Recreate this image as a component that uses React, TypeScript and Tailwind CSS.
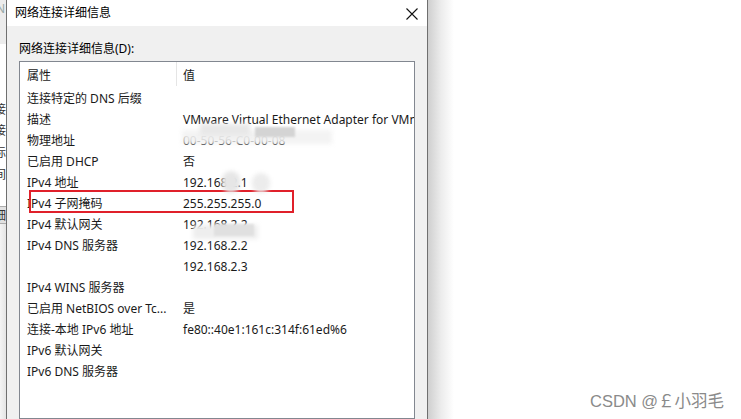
import React from "react";

const rows: [string, string][] = [
  ["连接特定的 DNS 后缀", ""],
  ["描述", "VMware Virtual Ethernet Adapter for VMnet8"],
  ["物理地址", "00-50-56-C0-00-08"],
  ["已启用 DHCP", "否"],
  ["IPv4 地址", "192.168.2.1"],
  ["IPv4 子网掩码", "255.255.255.0"],
  ["IPv4 默认网关", "192.168.2.2"],
  ["IPv4 DNS 服务器", "192.168.2.2"],
  ["", "192.168.2.3"],
  ["IPv4 WINS 服务器", ""],
  ["已启用 NetBIOS over Tc...", "是"],
  ["连接-本地 IPv6 地址", "fe80::40e1:161c:314f:61ed%6"],
  ["IPv6 默认网关", ""],
  ["IPv6 DNS 服务器", ""],
];

const font = "font-['Segoe_UI','Noto_Sans','Noto_Sans_CJK_SC',sans-serif]";

export default function App() {
  return (
    <div className={`relative w-[741px] h-[419px] bg-white overflow-hidden flex ${font} text-[12px] text-[#1a1a1a]`}>
      {/* left strip of underlying window */}
      <div className="w-[6px] flex flex-col overflow-hidden bg-white text-[12px] text-[#333]">
        <div className="h-[44px] bg-[#ececec] text-[#9aa] leading-[18px] -ml-[4px]">N</div>
        <div className="h-[56px]" />
        <div className="h-[20px] leading-[20px] -ml-[6px]">接</div>
        <div className="h-[22px] leading-[22px] -ml-[6px]">接</div>
        <div className="h-[22px] leading-[22px] -ml-[6px]">际:</div>
        <div className="h-[22px] leading-[22px] -ml-[6px]">间:</div>
        <div className="h-[20px]" />
        <div className="h-[18px] leading-[18px] bg-[#e1e1e1] border-y border-[#adadad] -ml-[6px] pl-0">细</div>
        <div className="flex-1 bg-gradient-to-r from-[#f4f4f4] to-[#e4e4e4]" />
      </div>

      {/* dialog */}
      <div className="w-[422px] flex flex-col border-x border-[#6f6f6f]">
        <div className="h-[26px] bg-white flex items-center justify-between pl-[8px] pr-[9px]">
          <span className="text-[12px] leading-[16px] text-black">网络连接详细信息</span>
          <svg width="12" height="12" viewBox="0 0 12 12" className="mt-[1px]">
            <path d="M0.5 0.5 L11.5 11.5 M11.5 0.5 L0.5 11.5" stroke="#111" strokeWidth="1.1" />
          </svg>
        </div>
        <div className="flex-1 bg-[#f0f0f0] px-[12px] pt-[14px] flex flex-col">
          <div className="h-[17px] leading-[17px] mb-[4px] text-black">网络连接详细信息(D):</div>
          <div className="w-[396px] flex-1 bg-white border border-[#828790] flex flex-col">
            <div className="h-[24px] flex items-center shrink-0">
              <div className="w-[157px] h-[24px] pl-[7px] pt-[3px] flex items-center border-r border-[#e5e5e5]">属性</div>
              <div className="pl-[6px] pt-[3px]">值</div>
            </div>
            {rows.map(([k, v], i) => (
              <div key={i} className="h-[21px] pt-[4px] flex items-center shrink-0 whitespace-nowrap">
                <div className="w-[156px] pl-[7px] overflow-hidden">{k}</div>
                <div className="w-[238px] pl-[7px] overflow-hidden">{v}</div>
              </div>
            ))}
          </div>
        </div>
      </div>

      {/* shadow */}
      <div className="w-[26px] bg-gradient-to-r from-[#cfcfcf] via-[#ececec] to-white" />
      <div className="flex-1 bg-white" />

      {/* red highlight box */}
      <div className="absolute left-[29px] top-[190px] w-[265px] h-[23px] border-2 border-[#e0202a]" />

      {/* blur smudges */}
      <div className="absolute left-[182px] top-[130px] w-[150px] h-[14px] bg-[#f2f2f2] blur-[2px] opacity-90" />
      <div className="absolute left-[255px] top-[127px] w-[40px] h-[10px] bg-[#d4d4d4] blur-[1px]" />
      <div className="absolute left-[200px] top-[124px] w-[50px] h-[12px] bg-[#e8e8e8] blur-[2px]" />
      <div className="absolute left-[222px] top-[171px] w-[18px] h-[22px] bg-[#e6e6e6] rounded-full blur-[2px]" />
      <div className="absolute left-[252px] top-[173px] w-[18px] h-[20px] bg-[#ececec] rounded-full blur-[2px]" />
      <div className="absolute left-[193px] top-[225px] w-[65px] h-[14px] bg-[#eeeeee] blur-[2px]" />
      <div className="absolute left-[214px] top-[224px] w-[40px] h-[12px] bg-[#e0e0e0] blur-[1px]" />

      {/* watermark */}
      <div className="absolute left-[590px] top-[391px] text-[16.5px] leading-[20px] text-[#8a8a8a] font-['Liberation_Sans','Noto_Sans_CJK_SC',sans-serif]">
        CSDN @￡小羽毛
      </div>
    </div>
  );
}
